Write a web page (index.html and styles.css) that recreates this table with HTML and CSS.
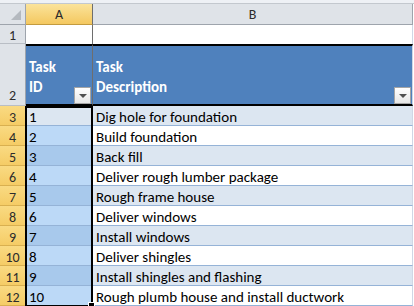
FILE: index.html
```html
<!DOCTYPE html>
<html lang="en">
<head>
    <meta charset="UTF-8">
    <meta name="viewport" content="width=device-width, initial-scale=1.0">
    <title>Task List</title>
    <link rel="stylesheet" href="styles.css">
</head>
<body>
    <div class="sheet">
        <div class="strip"></div>
        <div class="grid">
            <!-- column headers -->
            <div class="corner"><span class="corner-tri"></span></div>
            <div class="colhead active">A</div>
            <div class="colhead">B</div>
            <div class="edge"></div>

            <!-- row 1 -->
            <div class="rowhead">1</div>
            <div class="cell blank col-a"></div>
            <div class="cell blank"></div>
            <div class="edge"></div>

            <!-- row 2: table header -->
            <div class="rowhead tall">2</div>
            <div class="cell th col-a">Task<br>ID<span class="filter"></span></div>
            <div class="cell th">Task<br>Description<span class="filter"></span></div>
            <div class="edge"></div>

            <div class="rowhead hl">3</div>
            <div class="cell band col-a current">1</div>
            <div class="cell band">Dig hole for foundation</div>
            <div class="edge"></div>

            <div class="rowhead hl">4</div>
            <div class="cell col-a picked">2</div>
            <div class="cell">Build foundation</div>
            <div class="edge"></div>

            <div class="rowhead hl">5</div>
            <div class="cell band col-a picked">3</div>
            <div class="cell band">Back fill</div>
            <div class="edge"></div>

            <div class="rowhead hl">6</div>
            <div class="cell col-a picked">4</div>
            <div class="cell">Deliver rough lumber package</div>
            <div class="edge"></div>

            <div class="rowhead hl">7</div>
            <div class="cell band col-a picked">5</div>
            <div class="cell band">Rough frame house</div>
            <div class="edge"></div>

            <div class="rowhead hl">8</div>
            <div class="cell col-a picked">6</div>
            <div class="cell">Deliver windows</div>
            <div class="edge"></div>

            <div class="rowhead hl">9</div>
            <div class="cell band col-a picked">7</div>
            <div class="cell band">Install windows</div>
            <div class="edge"></div>

            <div class="rowhead hl">10</div>
            <div class="cell col-a picked">8</div>
            <div class="cell">Deliver shingles</div>
            <div class="edge"></div>

            <div class="rowhead hl">11</div>
            <div class="cell band col-a picked">9</div>
            <div class="cell band">Install shingles and flashing</div>
            <div class="edge"></div>

            <div class="rowhead hl">12</div>
            <div class="cell col-a picked">10</div>
            <div class="cell">Rough plumb house and install ductwork</div>
            <div class="edge"></div>

            <!-- selection frame around A3:A12 -->
            <div class="selection"><span class="handle"></span></div>
        </div>
    </div>
</body>
</html>
```

FILE: styles.css
```css
body {
    margin: 0;
    padding: 0;
    background-color: #ffffff;
    font-family: Carlito, Lato, "Liberation Sans", sans-serif;
    font-size: 15px;
    color: #000;
    overflow: hidden;
}

.sheet {
    width: 414px;
    height: 306px;
    overflow: hidden;
}

.strip {
    height: 3px;
    background-color: #eef1f5;
    border-bottom: 1px solid #c3c8ce;
}

.grid {
    position: relative;
    display: grid;
    grid-template-columns: 26px 67px 320px 1px;
    grid-template-rows: 21px 19px 62px repeat(10, 20px);
}

.grid > div {
    box-sizing: border-box;
}

.corner {
    position: relative;
    background-color: #dfe3e8;
    border-right: 1px solid #9ea4ac;
    border-bottom: 1px solid #9ea4ac;
}

.corner-tri {
    position: absolute;
    right: 4px;
    bottom: 4px;
    width: 0;
    height: 0;
    border-left: 10px solid transparent;
    border-bottom: 10px solid #b4b9bf;
}

.colhead {
    display: flex;
    align-items: center;
    justify-content: center;
    background-color: #dfe3e8;
    border-right: 1px solid #9ea4ac;
    border-bottom: 1px solid #9ea4ac;
    color: #2c2c2c;
    font-size: 14px;
}

.colhead.active {
    background: linear-gradient(#fbe39a, #f4c860);
    border-bottom-color: #c39b3f;
    border-right-color: #6e6e6e;
}

.edge {
    background-color: #ffffff;
}

.rowhead {
    display: flex;
    align-items: center;
    justify-content: center;
    padding-top: 3px;
    background-color: #dfe3e8;
    border-right: 1px solid #9ea4ac;
    border-bottom: 1px solid #b9bec5;
    color: #2c2c2c;
    font-size: 14px;
}

.rowhead.tall {
    align-items: flex-end;
    padding-top: 0;
    padding-bottom: 1px;
}

.rowhead.hl {
    background: linear-gradient(#f9da82, #f5cc66);
    border-bottom-color: #d9b050;
    border-right-color: #c39b3f;
}

.cell {
    position: relative;
    padding: 2px 3px 0;
    line-height: 19px;
    white-space: nowrap;
    overflow: hidden;
    background-color: #ffffff;
    border-bottom: 1px solid #95b3d7;
    border-right: 1px solid #d0d7e5;
}

.cell.col-a {
    border-right-color: #6e6e6e;
}

.cell.blank {
    border-bottom: none;
}

.cell.band {
    background-color: #dce6f1;
}

.cell.picked {
    background-color: #bcd9f7;
}

.cell.band.picked {
    background-color: #a8c9ec;
}

.cell.current {
    background-color: #dce6f1;
}

.cell.th {
    background-color: #4f81bd;
    color: #ffffff;
    font-weight: bold;
    line-height: 20px;
    border-top: 2px solid #000;
    border-bottom: 2px solid #000;
    padding-top: 11px;
}

.filter {
    position: absolute;
    right: 1px;
    bottom: 0;
    width: 17px;
    height: 17px;
    box-sizing: border-box;
    background: linear-gradient(#ffffff, #e6e6e6);
    border: 1px solid #a5a5a5;
}

.filter::after {
    content: "";
    position: absolute;
    left: 4px;
    top: 6px;
    width: 0;
    height: 0;
    border-left: 4px solid transparent;
    border-right: 4px solid transparent;
    border-top: 4px solid #505050;
}

.selection {
    position: absolute;
    left: 25px;
    top: 102px;
    width: 68px;
    height: 201px;
    border: 2px solid #000;
    pointer-events: none;
}

.handle {
    position: absolute;
    right: -4px;
    bottom: -4px;
    width: 5px;
    height: 5px;
    background-color: #000;
    border: 1px solid #fff;
}
```
